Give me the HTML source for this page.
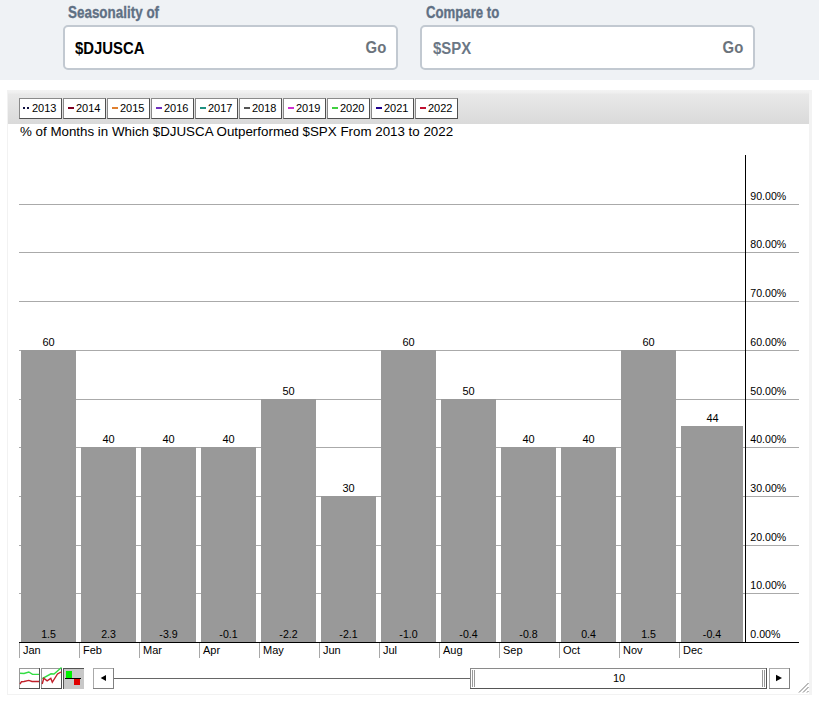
<!DOCTYPE html>
<html><head><meta charset="utf-8">
<style>
html,body{margin:0;padding:0;}
body{width:819px;height:703px;overflow:hidden;position:relative;background:#fff;font-family:"Liberation Sans",sans-serif;}
.band{position:absolute;left:0;top:0;width:819px;height:80px;background:#eff2f5;}
.lbl{-webkit-text-stroke:0.35px #5f7084;position:absolute;top:2.7px;font-weight:bold;font-size:17px;color:#5f7084;transform-origin:0 0;transform:scaleX(0.79);white-space:nowrap;}
.inp{position:absolute;top:25px;width:331px;height:41px;border:2px solid #c2c9d1;border-radius:5px;background:#fff;box-sizing:content-box;}
.inp .v{position:absolute;left:10px;top:13px;font-size:16px;transform-origin:0 0;transform:scaleX(0.93);font-weight:bold;white-space:nowrap;}
.inp .go{position:absolute;right:9.5px;top:11.7px;transform-origin:100% 0;transform:scaleX(0.93);font-size:16px;font-weight:bold;color:#6b737c;}
.panel{position:absolute;left:7px;top:90px;width:801px;height:603px;border:1px solid #f2f2f2;border-right:3px solid #f3f3f3;background:#fff;}
.legend{position:absolute;left:8px;top:90px;width:801px;height:34px;background:linear-gradient(#f3f3f3 0px,#efefef 3px,#e9e9e9 4px,#dadada 100%);}
.btn{position:absolute;top:98px;width:41px;height:19px;border:1px solid #8a8a8a;border-right-color:#505050;border-bottom-color:#505050;background:#fff;font-size:11px;}
.btn i{position:absolute;left:3.5px;top:8px;width:6px;height:2px;}
.btn span{position:absolute;left:12px;top:3px;}
.title{position:absolute;left:20px;top:124px;font-size:13.35px;color:#000;white-space:nowrap;}
svg{position:absolute;left:0;top:0;}
</style></head>
<body>
<div class="band"></div>
<div class="lbl" style="left:68px;">Seasonality of</div>
<div class="lbl" style="left:425.8px;transform:scaleX(0.775);">Compare to</div>
<div class="inp" style="left:63px;"><div class="v" style="color:#000;">$DJUSCA</div><div class="go">Go</div></div>
<div class="inp" style="left:420px;"><div class="v" style="color:#6b7785;left:11px;">$SPX</div><div class="go">Go</div></div>

<div class="panel"></div>
<div class="legend"></div>
<div class="btn" style="left:19px;"><i style="background:#101040;width:2px;left:3px;top:8px;"></i><i style="background:#101040;width:2px;left:7px;top:8px;"></i><span>2013</span></div>
<div class="btn" style="left:63px;"><i style="background:#800020;"></i><span>2014</span></div>
<div class="btn" style="left:107px;"><i style="background:#e08030;"></i><span>2015</span></div>
<div class="btn" style="left:151px;"><i style="background:#7030c0;"></i><span>2016</span></div>
<div class="btn" style="left:195px;"><i style="background:#209080;"></i><span>2017</span></div>
<div class="btn" style="left:239px;"><i style="background:#555555;"></i><span>2018</span></div>
<div class="btn" style="left:283px;"><i style="background:#d030d0;"></i><span>2019</span></div>
<div class="btn" style="left:327px;"><i style="background:#40d040;"></i><span>2020</span></div>
<div class="btn" style="left:371px;"><i style="background:#200090;"></i><span>2021</span></div>
<div class="btn" style="left:415px;"><i style="background:#c01030;"></i><span>2022</span></div>
<div class="title">% of Months in Which $DJUSCA Outperformed $SPX From 2013 to 2022</div>

<svg width="819" height="703" viewBox="0 0 819 703" style="font-family:'Liberation Sans',sans-serif;">
 <g fill="#aaaaaa" shape-rendering="crispEdges">
  <rect x="19" y="204" width="780" height="1"/>
  <rect x="19" y="252" width="780" height="1"/>
  <rect x="19" y="301" width="780" height="1"/>
  <rect x="19" y="350" width="780" height="1"/>
  <rect x="19" y="399" width="780" height="1"/>
  <rect x="19" y="447" width="780" height="1"/>
  <rect x="19" y="496" width="780" height="1"/>
  <rect x="19" y="545" width="780" height="1"/>
  <rect x="19" y="593" width="780" height="1"/>
 </g>
 <g fill="#999999" shape-rendering="crispEdges">
  <rect x="21" y="350" width="55" height="292"/>
  <rect x="81" y="447" width="55" height="195"/>
  <rect x="141" y="447" width="55" height="195"/>
  <rect x="201" y="447" width="55" height="195"/>
  <rect x="261" y="399" width="55" height="243"/>
  <rect x="321" y="496" width="55" height="146"/>
  <rect x="381" y="350" width="55" height="292"/>
  <rect x="441" y="399" width="55" height="243"/>
  <rect x="501" y="447" width="55" height="195"/>
  <rect x="561" y="447" width="55" height="195"/>
  <rect x="621" y="350" width="55" height="292"/>
  <rect x="681" y="426" width="62" height="216"/>
 </g>
 <g shape-rendering="crispEdges">
  <rect x="745" y="155" width="1" height="487" fill="#000"/>
  <rect x="19" y="642" width="780" height="1" fill="#000"/>
 </g>
 <g fill="#a8a8a8" shape-rendering="crispEdges">
  <rect x="19" y="643" width="1" height="15"/>
  <rect x="79" y="643" width="1" height="15"/>
  <rect x="139" y="643" width="1" height="15"/>
  <rect x="199" y="643" width="1" height="15"/>
  <rect x="259" y="643" width="1" height="15"/>
  <rect x="319" y="643" width="1" height="15"/>
  <rect x="379" y="643" width="1" height="15"/>
  <rect x="439" y="643" width="1" height="15"/>
  <rect x="499" y="643" width="1" height="15"/>
  <rect x="559" y="643" width="1" height="15"/>
  <rect x="619" y="643" width="1" height="15"/>
  <rect x="679" y="643" width="1" height="15"/>
 </g>
 <g font-size="11" fill="#000" text-anchor="middle">
  <text x="48.5" y="346">60</text>
  <text x="108.5" y="443">40</text>
  <text x="168.5" y="443">40</text>
  <text x="228.5" y="443">40</text>
  <text x="288.5" y="395">50</text>
  <text x="348.5" y="492">30</text>
  <text x="408.5" y="346">60</text>
  <text x="468.5" y="395">50</text>
  <text x="528.5" y="443">40</text>
  <text x="588.5" y="443">40</text>
  <text x="648.5" y="346">60</text>
  <text x="712.5" y="422">44</text>
 </g>
 <g font-size="10.6" fill="#000" text-anchor="middle">
  <text x="48.5" y="638">1.5</text>
  <text x="108.5" y="638">2.3</text>
  <text x="168.5" y="638">-3.9</text>
  <text x="228.5" y="638">-0.1</text>
  <text x="288.5" y="638">-2.2</text>
  <text x="348.5" y="638">-2.1</text>
  <text x="408.5" y="638">-1.0</text>
  <text x="468.5" y="638">-0.4</text>
  <text x="528.5" y="638">-0.8</text>
  <text x="588.5" y="638">0.4</text>
  <text x="648.5" y="638">1.5</text>
  <text x="712" y="638">-0.4</text>
 </g>
 <g font-size="11" fill="#000">
  <text x="23" y="654">Jan</text>
  <text x="83" y="654">Feb</text>
  <text x="143" y="654">Mar</text>
  <text x="203" y="654">Apr</text>
  <text x="263" y="654">May</text>
  <text x="323" y="654">Jun</text>
  <text x="383" y="654">Jul</text>
  <text x="443" y="654">Aug</text>
  <text x="503" y="654">Sep</text>
  <text x="563" y="654">Oct</text>
  <text x="623" y="654">Nov</text>
  <text x="683" y="654">Dec</text>
 </g>
 <g font-size="10.6" fill="#000">
  <text x="750.3" y="200">90.00%</text>
  <text x="750.3" y="248">80.00%</text>
  <text x="750.3" y="297">70.00%</text>
  <text x="750.3" y="346">60.00%</text>
  <text x="750.3" y="395">50.00%</text>
  <text x="750.3" y="443">40.00%</text>
  <text x="750.3" y="492">30.00%</text>
  <text x="750.3" y="541">20.00%</text>
  <text x="750.3" y="589">10.00%</text>
  <text x="750.3" y="638">0.00%</text>
 </g>
 <!-- navigator -->
 <g shape-rendering="crispEdges">
  <rect x="19" y="668" width="21" height="21" fill="#fff"/>
  <rect x="19" y="668" width="21" height="1" fill="#9a9a9a"/>
  <rect x="19" y="668" width="1" height="21" fill="#9a9a9a"/>
  <rect x="39" y="668" width="1" height="21" fill="#505050"/>
  <rect x="19" y="688" width="21" height="1" fill="#505050"/>
  <rect x="41" y="668" width="21" height="21" fill="#fff"/>
  <rect x="41" y="668" width="21" height="1" fill="#9a9a9a"/>
  <rect x="41" y="668" width="1" height="21" fill="#9a9a9a"/>
  <rect x="61" y="668" width="1" height="21" fill="#505050"/>
  <rect x="41" y="688" width="21" height="1" fill="#505050"/>
  <rect x="63" y="668" width="21" height="21" fill="#c8c8c8"/>
  <rect x="63" y="668" width="21" height="1" fill="#555"/>
  <rect x="63" y="668" width="1" height="21" fill="#555"/>
  <rect x="66" y="671" width="6" height="7" fill="#00f000"/>
  <rect x="65" y="678" width="16" height="1" fill="#000"/>
  <rect x="74" y="679" width="6" height="6" fill="#e00000"/>
  <rect x="93" y="668" width="21" height="21" fill="#fff"/>
  <rect x="93" y="668" width="21" height="1" fill="#aaa"/>
  <rect x="93" y="668" width="1" height="21" fill="#aaa"/>
  <rect x="113" y="668" width="1" height="21" fill="#808080"/>
  <rect x="93" y="688" width="21" height="1" fill="#808080"/>
  <rect x="114" y="678" width="357" height="1" fill="#666"/>
  <rect x="470" y="668" width="297" height="21" fill="#fff"/>
  <rect x="470" y="668" width="297" height="1" fill="#8a8a8a"/>
  <rect x="470" y="668" width="1" height="21" fill="#8a8a8a"/>
  <rect x="766" y="668" width="1" height="21" fill="#555"/>
  <rect x="470" y="688" width="297" height="1" fill="#555"/>
  <rect x="472" y="670" width="1" height="17" fill="#999"/>
  <rect x="474" y="670" width="1" height="17" fill="#999"/>
  <rect x="762" y="670" width="1" height="17" fill="#999"/>
  <rect x="764" y="670" width="1" height="17" fill="#999"/>
  <rect x="769" y="668" width="21" height="21" fill="#fff"/>
  <rect x="769" y="668" width="21" height="1" fill="#aaa"/>
  <rect x="769" y="668" width="1" height="21" fill="#aaa"/>
  <rect x="789" y="668" width="1" height="21" fill="#808080"/>
  <rect x="769" y="688" width="21" height="1" fill="#808080"/>
 </g>
 <path d="M20 673.2 L24 673.5 L28.8 672 L32.5 674.4 L39 674.4" stroke="#33dd44" stroke-width="1.4" fill="none"/>
 <path d="M20 684 L21.5 681.7 L24 681.5 L28.8 680.4 L32 681.5 L39 681.5" stroke="#c0202a" stroke-width="1.4" fill="none"/>
 <path d="M42.2 678.7 L51 673.8 L54 674 L61.5 667.5" stroke="#33dd44" stroke-width="1.4" fill="none"/>
 <path d="M42.2 684 L43.8 678.3 L47.1 680.8 L50.8 678.3 L52.3 682.3 L57.5 674 L61 672" stroke="#c0202a" stroke-width="1.4" fill="none"/>
 <path d="M100.7 678 L106 675 L106 681 Z" fill="#000"/>
 <path d="M782 678 L776 674.8 L776 681.2 Z" fill="#000"/>
 <text x="619" y="682" font-size="11" text-anchor="middle">10</text>
 <path d="M799 692.5 L808.5 683 M803 692.5 L808.5 687 M807 692.5 L808.5 691" stroke="#6a6a6a" stroke-width="0.9" fill="none"/>
</svg>
</body></html>
